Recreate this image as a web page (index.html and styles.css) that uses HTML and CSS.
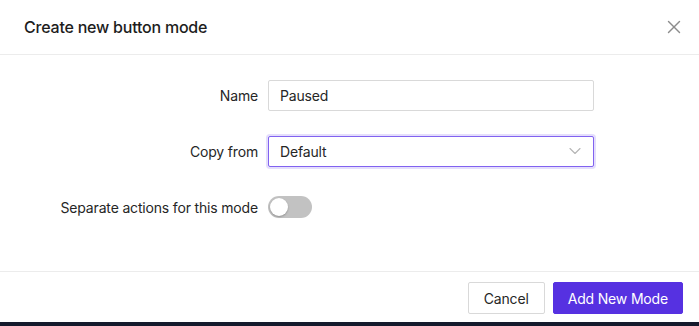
FILE: index.html
```html
<!DOCTYPE html>
<html lang="en">
<head>
  <meta charset="UTF-8" />
  <meta name="viewport" content="width=device-width, initial-scale=1.0"/>
  <title>Create new button mode</title>
  <link rel="stylesheet" href="styles.css">
</head>
<body>
  <div class="modal">
    <div class="modal-header">
      <h2>Create new button mode</h2>
      <button class="close-btn" aria-label="Close">
        <svg width="14" height="14" viewBox="0 0 14 14" fill="none" stroke="#8c8c8c" stroke-width="1.4" stroke-linecap="round">
          <line x1="1.5" y1="1.5" x2="12.5" y2="12.5"/>
          <line x1="12.5" y1="1.5" x2="1.5" y2="12.5"/>
        </svg>
      </button>
    </div>

    <div class="modal-body">
      <label for="mode-name">Name</label>
      <input type="text" id="mode-name" value="Paused">

      <label for="copy-from">Copy from</label>
      <div class="select focused" id="copy-from">
        <span>Default</span>
        <svg width="12" height="8" viewBox="0 0 12 8" fill="none" stroke="#b5b5b5" stroke-width="1.1" stroke-linecap="round" stroke-linejoin="round">
          <polyline points="1 1.5 6 6.5 11 1.5"/>
        </svg>
      </div>

      <label>Separate actions for this mode</label>
      <div class="field-toggle">
        <span class="toggle"><span class="knob"></span></span>
      </div>
    </div>

    <div class="modal-footer">
      <button class="btn btn-default">Cancel</button>
      <button class="btn btn-primary">Add New Mode</button>
    </div>
  </div>
</body>
</html>
```
FILE: styles.css
```css
* {
  margin: 0; padding: 0; box-sizing: border-box;
  font-family: Inter, 'Noto Sans', sans-serif;
  letter-spacing: -0.17px;
}

body {
  background-color: #151a2c;
  width: 699px;
  height: 326px;
  overflow: hidden;
}

.modal {
  background-color: #ffffff;
  height: 322px;
  display: flex;
  flex-direction: column;
  color: #1f1f1f;
}

.modal-header {
  height: 55px;
  border-bottom: 1px solid #ececec;
  display: flex;
  align-items: center;
  justify-content: space-between;
  padding: 0 18px 1px 24px;
}

.modal-header h2 {
  font-size: 16px;
  font-weight: 500;
  color: #1d1d1d;
  letter-spacing: -0.22px;
}

.close-btn {
  background: none;
  border: none;
  width: 14px;
  height: 14px;
  display: flex;
  cursor: pointer;
}

.modal-body {
  flex: 1;
  display: grid;
  grid-template-columns: 234px 326px;
  grid-auto-rows: 32px;
  column-gap: 10px;
  row-gap: 24px;
  align-items: center;
  padding: 24px 24px 0;
}

.modal-body label {
  text-align: right;
  font-size: 14px;
  color: #262626;
}

input, .select {
  width: 100%;
  height: 31px;
  border: 1px solid #d9d9d9;
  border-radius: 2px;
  padding: 0 11px;
  font-size: 14px;
  color: #262626;
  background-color: #ffffff;
}

.select {
  display: flex;
  align-items: center;
  justify-content: space-between;
  padding-right: 12px;
}

.select.focused {
  border-color: #8162f0;
  box-shadow: 0 0 0 2px rgba(120, 90, 240, 0.2);
}

.toggle {
  display: block;
  width: 44px;
  height: 22px;
  border-radius: 11px;
  background-color: #c2c2c2;
  padding: 2px;
}

.knob {
  display: block;
  width: 18px;
  height: 18px;
  border-radius: 50%;
  background-color: #ffffff;
  box-shadow: 0 1px 2px rgba(0, 0, 0, 0.25);
}

.modal-footer {
  border-top: 1px solid #ececec;
  display: flex;
  justify-content: flex-end;
  gap: 8px;
  padding: 10px 16px 8px;
}

.btn {
  height: 32px;
  padding: 0 15px;
  border-radius: 2px;
  font-size: 14px;
  cursor: pointer;
}

.btn-default {
  background-color: #ffffff;
  border: 1px solid #d9d9d9;
  color: #262626;
}

.btn-primary {
  background-color: #5631e1;
  border: 1px solid #5631e1;
  color: #ffffff;
  padding: 0 14px;
}
```
